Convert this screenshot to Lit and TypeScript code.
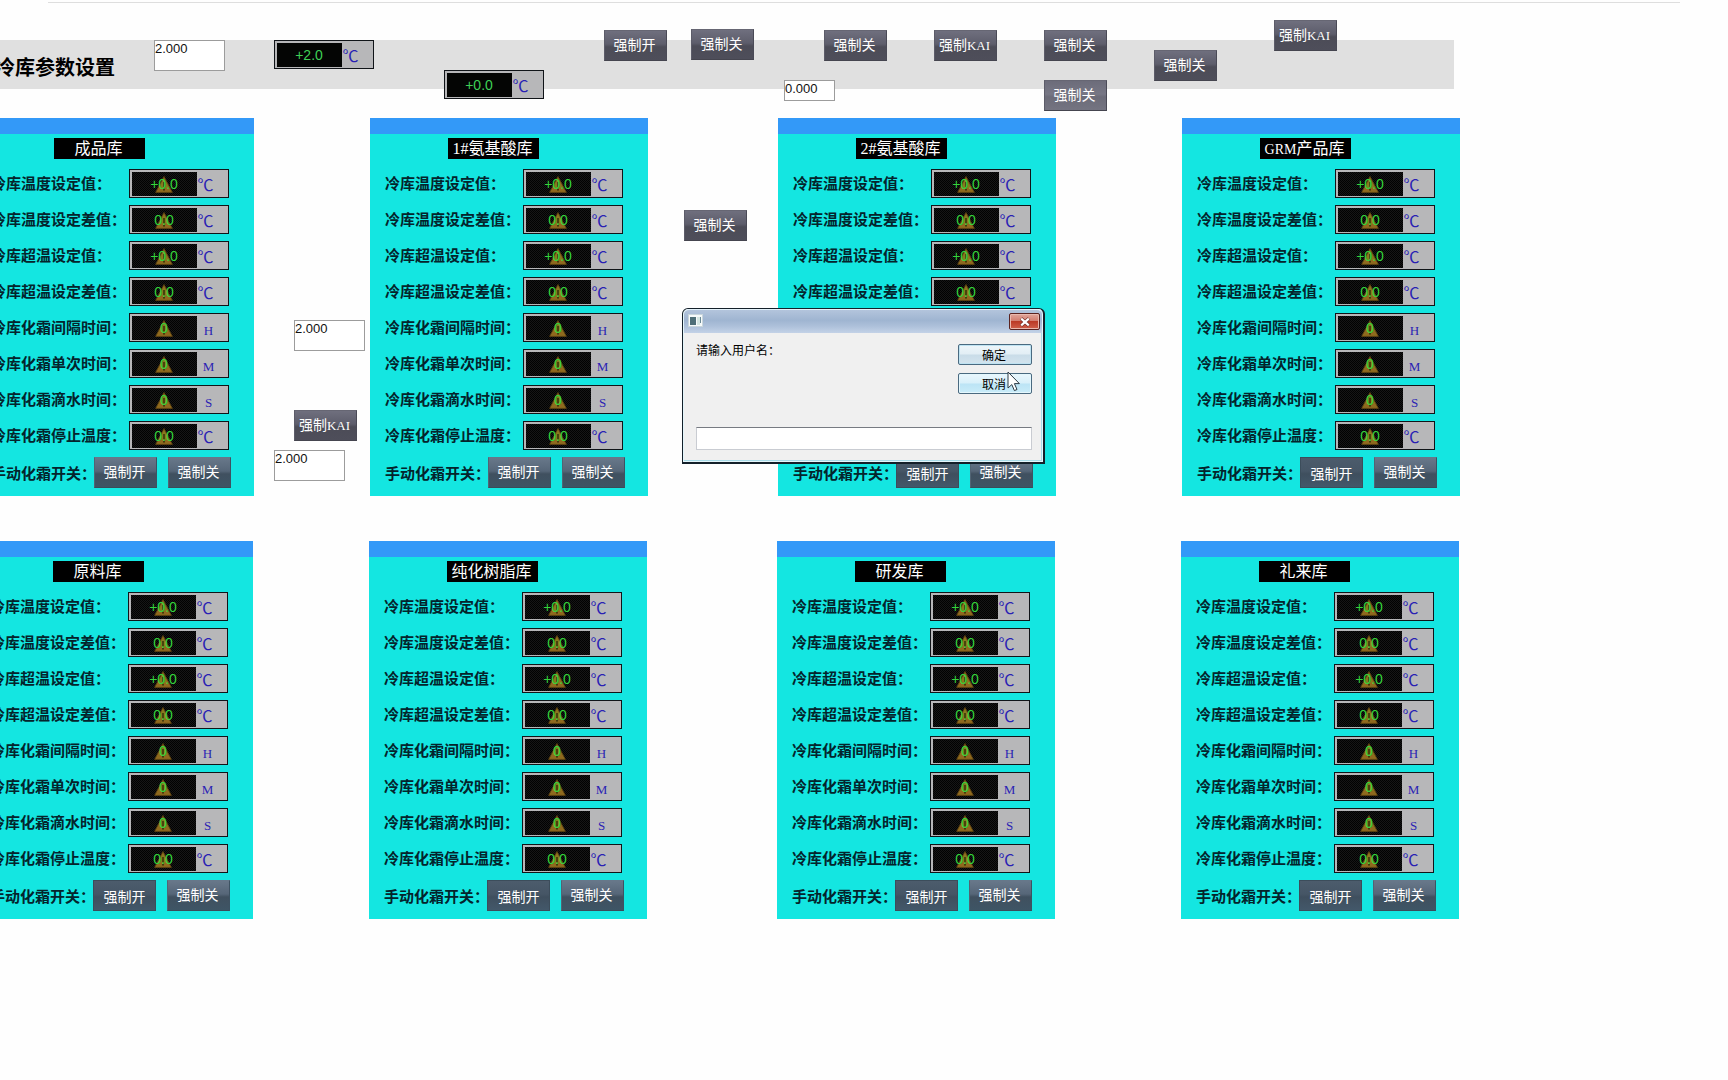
import { LitElement, html, css, svg, nothing } from "lit";
import { customElement, property } from "lit/decorators.js";
import { classMap } from "lit/directives/class-map.js";
import { styleMap } from "lit/directives/style-map.js";

const shared = css`
  *,
  *::before,
  *::after {
    box-sizing: border-box;
  }
  button,
  input {
    margin: 0;
    font-family: inherit;
    border-radius: 0;
  }
  .latin {
    font-family: "Liberation Serif", serif;
    font-size: 13px;
  }
`;

/** Renders Latin runs in the narrow serif face, the rest in the page face. */
const mixed = (text: string) =>
  text
    .split(/([A-Z]+)/)
    .filter(Boolean)
    .map((part) => (/^[A-Z]+$/.test(part) ? html`<span class="latin">${part}</span>` : part));

const warning = svg`
  <path d="M9 0.5 L17.4 16.4 H0.6 Z" fill="#8f6a1e" stroke="#5e4412" stroke-width="0.8" stroke-linejoin="round" />
  <path d="M9 3 L13.4 12 H4.6 Z" fill="#7f8a1e" opacity="0.6" />
  <path d="M9 6 V11.5" stroke="#3a340a" stroke-width="1.6" />
  <circle cx="9" cy="13.8" r="1" fill="#3a340a" />
`;

/** Numeric field with a black read-out and a unit at its right. */
@customElement("value-box")
class ValueBox extends LitElement {
  @property() value = "";
  @property() unit = "℃";
  @property() label = "";
  @property({ type: Boolean }) fault = false;

  static styles = [
    shared,
    css`
      :host {
        display: block;
        width: 100px;
      }
      .box {
        display: flex;
        isolation: isolate;
        height: 29px;
        padding: 2px;
        border: 1px solid #101418;
        background: #b7b7b9;
      }
      .screen {
        display: grid;
        width: 65px;
        height: 24px;
        background: #040504;
      }
      .fault .screen {
        background: repeating-conic-gradient(#161616 0 25%, #020202 0 50%) 0 0 / 2px 2px;
      }
      .mark,
      .value {
        grid-area: 1 / 1;
      }
      .mark {
        width: 18px;
        height: 17px;
        place-self: center;
      }
      .value {
        width: 64px;
        height: 24px;
        padding: 0;
        border: 0;
        outline: 0;
        background: none;
        color: #3fd056;
        font: 14px/24px "Liberation Sans", Arial, sans-serif;
        text-align: center;
        z-index: 1;
      }
      .fault .mark {
        margin-right: 1px;
      }
      .fault .value {
        color: #35d43c;
      }
      .unit {
        flex: 1;
        padding-right: 12px;
        color: #2a1fb4;
        font: 16px/24px "Noto Sans CJK SC", sans-serif;
        text-align: center;
      }
      .letter {
        padding-right: 6px;
      }
    `,
  ];

  render() {
    return html`<div class=${classMap({ box: true, fault: this.fault })}>
      <div class="screen">
        ${this.fault ? html`<svg class="mark" viewBox="0 0 18 17" aria-hidden="true">${warning}</svg>` : nothing}
        <input class="value" aria-label=${this.label} .value=${this.value} />
      </div>
      <span class=${classMap({ unit: true, letter: this.unit !== "℃" })}>${mixed(this.unit)}</span>
    </div>`;
  }
}

/** Grey bevelled switch. */
@customElement("force-button")
class ForceButton extends LitElement {
  @property() text = "";
  @property() tone = "violet";

  static styles = [
    shared,
    css`
      :host {
        display: block;
      }
      .btn {
        display: block;
        width: 63px;
        height: 31px;
        padding: 0 2px 2px 0;
        border: 1px solid #50505c;
        border-color: #666673 #4a4a56 #45454f #5c5c69;
        background: linear-gradient(#6f6f7e, #5d5d6b 45%, #4c4c57 55%, #4e4e5a);
        color: #fff;
        font-size: 14px;
        line-height: 27px;
        text-align: center;
        white-space: nowrap;
      }
      .light {
        background: linear-gradient(#6c6c7a, #777785 45%, #6c6c79 55%, #747481);
      }
      .steel {
        border-color: #66788a #3d5262 #3a4c5a #526474;
        background: linear-gradient(#68788a, #566678 45%, #40505f 55%, #3e5565);
      }
      .pressed {
        padding: 2px 0 0;
        border-color: #3c4d5b;
        background: linear-gradient(#4c5c6c, #465666 45%, #3f4f5e 55%, #43586a);
      }
    `,
  ];

  render() {
    return html`<button
      class=${classMap({
        btn: true,
        light: this.tone === "light",
        steel: this.tone === "steel",
        pressed: this.tone === "pressed",
      })}
    >
      ${mixed(this.text)}
    </button>`;
  }
}

const PARAMETERS = [
  { label: "冷库温度设定值：", value: "+0.0", unit: "℃" },
  { label: "冷库温度设定差值：", value: "0.0", unit: "℃" },
  { label: "冷库超温设定值：", value: "+0.0", unit: "℃" },
  { label: "冷库超温设定差值：", value: "0.0", unit: "℃" },
  { label: "冷库化霜间隔时间：", value: "0", unit: "H" },
  { label: "冷库化霜单次时间：", value: "0", unit: "M" },
  { label: "冷库化霜滴水时间：", value: "0", unit: "S" },
  { label: "冷库化霜停止温度：", value: "0.0", unit: "℃" },
];

/** One cold store with its parameters. */
@customElement("store-card")
class StoreCard extends LitElement {
  @property() name = "";
  @property({ type: Boolean }) pressed = false;

  static styles = [
    shared,
    css`
      :host {
        display: block;
        width: 278px;
      }
      .card {
        border-top: 16px solid #3399f8;
        background: #14e6e1;
        padding: 4px 0 8px;
      }
      .name {
        width: 91px;
        height: 21px;
        margin: 0 auto 10px 78px;
        padding-right: 2px;
        background: #000;
        color: #fff;
        font: 16px/21px "Liberation Serif", "Noto Sans CJK SC", sans-serif;
        text-align: center;
        white-space: nowrap;
      }
      .name .latin {
        font-size: 14px;
      }
      .rows {
        display: flex;
        flex-direction: column;
        gap: 7px;
      }
      .row {
        display: flex;
        align-items: center;
        justify-content: space-between;
        padding: 0 25px 0 15px;
      }
      .label {
        padding-bottom: 2px;
        color: #04242c;
        font-size: 15px;
        font-weight: bold;
        line-height: 26px;
        white-space: nowrap;
      }
      .switches {
        padding-right: 23px;
      }
      .switches .label {
        flex: 1;
        min-width: 0;
        padding-bottom: 0;
      }
      .pair {
        display: flex;
        gap: 11px;
      }
    `,
  ];

  render() {
    return html`<section class="card">
      <h2 class="name">${mixed(this.name)}</h2>
      <div class="rows">
        ${PARAMETERS.map(
          (p) => html`<div class="row">
            <span class="label">${p.label}</span>
            <value-box fault .label=${p.label} .value=${p.value} .unit=${p.unit}></value-box>
          </div>`,
        )}
        <div class="row switches">
          <span class="label">手动化霜开关：</span>
          <div class="pair">
            <force-button text="强制开" tone=${this.pressed ? "pressed" : "steel"}></force-button>
            <force-button text="强制关" tone="steel"></force-button>
          </div>
        </div>
      </div>
    </section>`;
  }
}

/** Prompt window asking for the user name. */
@customElement("login-dialog")
class LoginDialog extends LitElement {
  static styles = [
    shared,
    css`
      :host {
        display: block;
        width: 363px;
      }
      .window {
        border: 1px solid #14202a;
        border-right-width: 2px;
        border-bottom-width: 2px;
        border-radius: 6px 6px 0 0;
        background: #f0f0f0;
        box-shadow: inset 0 0 0 1px #e4f6fb, inset -2px -2px 0 #a9dbe8;
        color: #000;
        font-size: 12px;
      }
      .bar {
        display: flex;
        align-items: flex-start;
        justify-content: space-between;
        height: 24px;
        margin: 0 1px;
        padding: 3px 2px 0 4px;
        border-top: 1px solid #e4f2fa;
        border-radius: 5px 5px 0 0;
        background: linear-gradient(#b3c4dc, #9fb5d1 45%, #adc0da 70%, #c3d2e7);
      }
      .icon {
        width: 15px;
        height: 13px;
        margin-top: 1px;
      }
      .close {
        display: grid;
        place-items: center;
        width: 31px;
        height: 17px;
        padding: 0;
        border: 1px solid #5a2320;
        border-radius: 2px;
        background: linear-gradient(#e0a79c, #d27e70 45%, #bb3a26 50%, #d0604a);
        box-shadow: inset 0 0 0 1px #e9b9ae;
      }
      .close svg {
        width: 12px;
        height: 10px;
      }
      .body {
        display: grid;
        grid-template-columns: 1fr 74px;
        padding: 11px 11px 12px 13px;
      }
      .prompt {
        line-height: 11px;
      }
      .actions {
        display: grid;
        gap: 8px;
      }
      .action {
        height: 21px;
        padding: 0 2px 0 0;
        border: 1px solid #4a6a80;
        border-radius: 2px;
        background: linear-gradient(#eef6fa, #e2eef5 48%, #c9dce8 52%, #d3e4ee);
        box-shadow: inset 0 0 0 1px #bfe3f2;
        color: #000;
        font-size: 12px;
        line-height: 17px;
      }
      .hot {
        background: linear-gradient(#eaf7fd, #d8f0fa 48%, #bce4f5 52%, #c9ecf9);
        box-shadow: inset 0 0 0 1px #e4f7fd;
      }
      .entry {
        grid-column: 1 / -1;
        width: 100%;
        height: 23px;
        margin-top: 33px;
        padding: 0 4px;
        border: 1px solid #c9ccd2;
        border-top-color: #777b82;
        outline: 0;
        background: #fff;
        font-size: 12px;
      }
    `,
  ];

  render() {
    return html`<div class="window" role="dialog">
      <div class="bar">
        <svg class="icon" viewBox="0 0 15 13" aria-hidden="true">
          <rect x="0.5" y="0.5" width="14" height="12" fill="#f6fafa" stroke="#c9d6dc" />
          <rect x="2" y="3" width="6" height="8" fill="#4f6f78" />
          <rect x="9" y="3" width="3" height="8" fill="#d5e6e2" />
          <rect x="12" y="3" width="1" height="6" fill="#6c8a96" />
        </svg>
        <button class="close" aria-label="关闭">
          <svg viewBox="0 0 12 10" aria-hidden="true">
            <path d="M2 1.5 L10 8.5 M10 1.5 L2 8.5" stroke="#6b2a22" stroke-width="3.6" />
            <path d="M2.2 1.7 L9.8 8.3 M9.8 1.7 L2.2 8.3" stroke="#fff" stroke-width="2.2" />
          </svg>
        </button>
      </div>
      <div class="body">
        <label class="prompt" for="user">请输入用户名：</label>
        <div class="actions">
          <button class="action">确定</button>
          <button class="action hot">取消</button>
        </div>
        <input class="entry" id="user" type="text" />
      </div>
    </div>`;
  }
}

type Item = { kind: "button" | "field" | "box"; x: number; y: number; text: string; tone?: string; small?: boolean };

const ITEMS: Item[] = [
  { kind: "field", x: 154, y: 40, text: "2.000" },
  { kind: "box", x: 274, y: 40, text: "+2.0" },
  { kind: "box", x: 444, y: 70, text: "+0.0" },
  { kind: "button", x: 604, y: 30, text: "强制开" },
  { kind: "button", x: 691, y: 29, text: "强制关" },
  { kind: "button", x: 824, y: 30, text: "强制关" },
  { kind: "button", x: 934, y: 30, text: "强制KAI" },
  { kind: "button", x: 1044, y: 30, text: "强制关" },
  { kind: "button", x: 1044, y: 80, text: "强制关", tone: "light" },
  { kind: "button", x: 1154, y: 50, text: "强制关" },
  { kind: "button", x: 1274, y: 20, text: "强制KAI" },
  { kind: "field", x: 784, y: 80, text: "0.000", small: true },
  { kind: "button", x: 684, y: 210, text: "强制关" },
  { kind: "field", x: 294, y: 320, text: "2.000" },
  { kind: "button", x: 294, y: 410, text: "强制KAI" },
  { kind: "field", x: 274, y: 450, text: "2.000" },
];

const STORES = [
  [
    { name: "成品库", pressed: false },
    { name: "1#氨基酸库", pressed: false },
    { name: "2#氨基酸库", pressed: true },
    { name: "GRM产品库", pressed: true },
  ],
  [
    { name: "原料库", pressed: true },
    { name: "纯化树脂库", pressed: true },
    { name: "研发库", pressed: true },
    { name: "礼来库", pressed: true },
  ],
];

@customElement("app-root")
class AppRoot extends LitElement {
  static styles = [
    shared,
    css`
      :host {
        display: block;
        position: relative;
        min-height: 100vh;
        overflow: hidden;
        background: #fefefe;
        font-family: "Noto Sans CJK SC", sans-serif;
      }
      .rule {
        height: 1px;
        margin: 2px 48px 37px;
        border: 0;
        background: #dedede;
      }
      .band {
        height: 49px;
        margin-right: 274px;
        padding-top: 5px;
        background: #e0e0e0;
      }
      .title {
        margin: 0 0 0 -5px;
        color: #000;
        font-size: 20px;
        font-weight: bold;
        line-height: 44px;
        white-space: nowrap;
      }
      .stores {
        display: grid;
        grid-template-columns: 394fr 408fr 404fr 546fr;
        margin: 29px 0 0 -24px;
      }
      .stores + .stores {
        margin: 45px 1px 0 -25px;
      }
      .item {
        position: absolute;
      }
      .field {
        width: 71px;
        height: 31px;
        padding: 0 0 15px;
        border: 1px solid #9c9c9c;
        outline: 0;
        background: #fff;
        color: #111;
        font: 13px/14px "Liberation Sans", Arial, sans-serif;
      }
      .small {
        width: 51px;
        height: 21px;
        padding-bottom: 4px;
      }
      .dialog {
        position: absolute;
        z-index: 1;
        left: 682px;
        top: 308px;
      }
      .cursor {
        position: absolute;
        z-index: 2;
        left: 1007px;
        top: 371px;
        width: 14px;
        height: 22px;
      }
    `,
  ];

  private item(i: Item) {
    const place = styleMap({ left: `${i.x}px`, top: `${i.y}px` });
    if (i.kind === "field")
      return html`<input
        class=${classMap({ item: true, field: true, small: !!i.small })}
        style=${place}
        aria-label="数值"
        .value=${i.text}
      />`;
    if (i.kind === "box")
      return html`<value-box class="item" style=${place} label="温度" .value=${i.text}></value-box>`;
    return html`<force-button class="item" style=${place} .text=${i.text} .tone=${i.tone ?? "violet"}></force-button>`;
  }

  render() {
    return html`
      <hr class="rule" />
      <header class="band"><h1 class="title">冷库参数设置</h1></header>
      ${STORES.map(
        (row) => html`<div class="stores">
          ${row.map((s) => html`<store-card .name=${s.name} .pressed=${s.pressed}></store-card>`)}
        </div>`,
      )}
      ${ITEMS.map((i) => this.item(i))}
      <login-dialog class="dialog"></login-dialog>
      <svg class="cursor" viewBox="0 0 14 22" aria-hidden="true">
        <path
          d="M1 1 V17 L4.8 13.6 L7.4 19.6 L10 18.5 L7.4 12.6 H12.4 Z"
          fill="#fff"
          stroke="#2c3a44"
          stroke-width="1"
          stroke-linejoin="round"
        />
      </svg>
    `;
  }
}
